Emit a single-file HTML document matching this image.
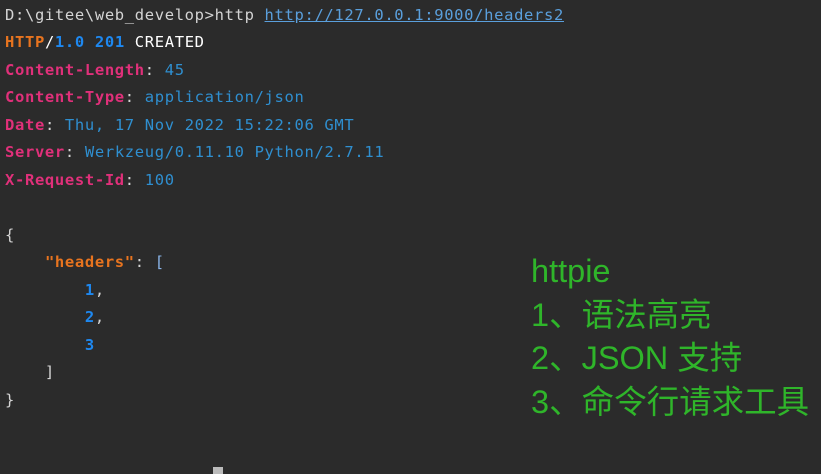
<!DOCTYPE html>
<html><head><meta charset="utf-8"><style>
body{margin:0;width:821px;height:474px;background:#2b2b2b;overflow:hidden;position:relative}
.t{position:absolute;left:5px;font-family:"DejaVu Sans Mono","Liberation Mono",monospace;font-size:15.5px;letter-spacing:0.65px;white-space:pre;color:#d4d4d4;line-height:20px}
.k{color:#e0307a;font-weight:bold}.v{color:#2f8fd0}.o{color:#e8741f;font-weight:bold}.b{color:#1e88f0;font-weight:bold}.w{color:#ffffff}.u{color:#5a9fdc;text-decoration:underline}
.g{position:absolute;left:531px;font-family:"Liberation Sans","Noto Sans CJK SC",sans-serif;font-size:32.5px;color:#2fb52a;white-space:pre;line-height:40px}
</style></head><body>
<div class="t" style="top:5px">D:\gitee\web_develop&gt;http <span class="u">http://127.0.0.1:9000/headers2</span></div>
<div class="t" style="top:32px"><span class="o">HTTP</span><span class="w">/</span><span class="b">1.0 201</span> <span class="w">CREATED</span></div>
<div class="t" style="top:60px"><span class="k">Content-Length</span>: <span class="v">45</span></div>
<div class="t" style="top:87px"><span class="k">Content-Type</span>: <span class="v">application/json</span></div>
<div class="t" style="top:115px"><span class="k">Date</span>: <span class="v">Thu, 17 Nov 2022 15:22:06 GMT</span></div>
<div class="t" style="top:142px"><span class="k">Server</span>: <span class="v">Werkzeug/0.11.10 Python/2.7.11</span></div>
<div class="t" style="top:170px"><span class="k">X-Request-Id</span>: <span class="v">100</span></div>
<div class="t" style="top:225px">{</div>
<div class="t" style="top:252px">    <span class="o">"headers"</span>: <span style="color:#8ab4e8">[</span></div>
<div class="t" style="top:280px">        <span class="b">1</span>,</div>
<div class="t" style="top:307px">        <span class="b">2</span>,</div>
<div class="t" style="top:335px">        <span class="b">3</span></div>
<div class="t" style="top:362px">    ]</div>
<div class="t" style="top:390px">}</div>
<div style="position:absolute;left:213px;top:467px;width:10px;height:7px;background:#bbb"></div>
<div class="g" style="top:251px">httpie</div>
<div class="g" style="top:295px">1、语法高亮</div>
<div class="g" style="top:338px">2、JSON 支持</div>
<div class="g" style="top:382px">3、命令行请求工具</div>
</body></html>
